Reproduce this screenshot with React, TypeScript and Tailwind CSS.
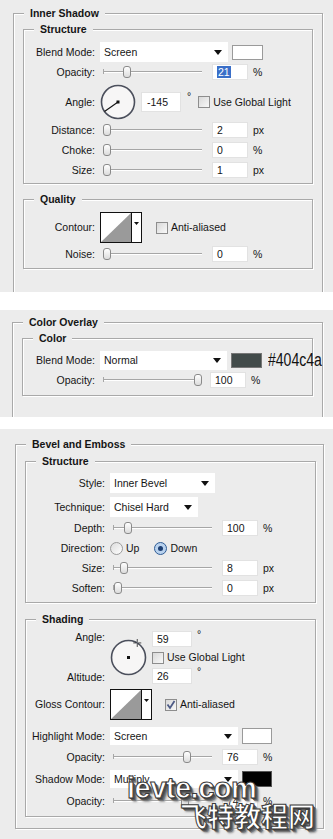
import type { ReactNode } from "react"

// Photoshop layer style dialog fragments, stacked on white

function Slider({ pct, w = "w-[99px]" }: { pct: number; w?: string }) {
  return (
    <div className={`relative h-[14px] shrink-0 ${w}`}>
      <div className="absolute left-0 right-0 top-[6px] h-px bg-[#a6a6a6]" />
      <div className="absolute left-0 right-0 top-[7px] h-px bg-white" />
      <div className="absolute left-0 top-[4px] h-[5px] w-px bg-[#a6a6a6]" />
      <div
        className="absolute top-px h-[12px] w-[8px] rounded-[3px] border border-[#8a8a8a] bg-gradient-to-b from-white to-[#dcdcdc]"
        style={{ left: `calc(${pct}% - ${(pct / 100) * 8}px)` }}
      />
    </div>
  )
}

function Field({ value, w = "w-[36px]", selected = false }: { value: string; w?: string; selected?: boolean }) {
  return (
    <div className={`flex h-[16px] shrink-0 items-center border border-[#e2e2e2] bg-white pl-[4px] ${w}`}>
      {selected ? <span className="bg-[#3a6fc8] px-px leading-[12px] text-white">{value}</span> : value}
    </div>
  )
}

function Arrow() {
  return (
    <svg width="8" height="5" viewBox="0 0 8 5" className="shrink-0">
      <path d="M0 0 H8 L4 5 Z" fill="#111" />
    </svg>
  )
}

function Dropdown({ value, w, h = "h-[20px]" }: { value: string; w: string; h?: string }) {
  return (
    <div className={`flex shrink-0 items-center justify-between bg-white pl-[4px] pr-[6px] ${w} ${h}`}>
      <span className="pt-px">{value}</span>
      <Arrow />
    </div>
  )
}

function Checkbox({ checked = false }: { checked?: boolean }) {
  return (
    <div className="flex h-[12px] w-[12px] shrink-0 items-center justify-center border border-[#8d8d8d] bg-gradient-to-br from-[#d9d9d9] to-[#f8f8f8]">
      {checked && (
        <svg width="10" height="10" viewBox="0 0 10 10">
          <path d="M1.5 4.5 L4 8 L8.5 1" fill="none" stroke="#4d5b86" strokeWidth="1.8" />
        </svg>
      )}
    </div>
  )
}

function Radio({ on = false }: { on?: boolean }) {
  return (
    <div
      className={`flex h-[13px] w-[13px] shrink-0 items-center justify-center rounded-full border ${
        on ? "border-[#2f5c95] bg-[#b9d2ee]" : "border-[#9a9a9a] bg-gradient-to-br from-[#dcdcdc] to-white"
      }`}
    >
      {on && <div className="h-[5px] w-[5px] rounded-full bg-[#1d3f73]" />}
    </div>
  )
}

function Dial({ angle, size = 36, cross = false }: { angle: number; size?: number; cross?: boolean }) {
  const c = size / 2
  const r = c - 1.5
  const a = (angle * Math.PI) / 180
  const x = c + Math.cos(a) * r
  const y = c - Math.sin(a) * r
  return (
    <svg width={size} height={size} viewBox={`0 0 ${size} ${size}`} className="shrink-0">
      <circle cx={c} cy={c} r={r} fill="#f7f6f6" stroke="#4b4f5c" strokeWidth="1.6" />
      {!cross && <line x1={c} y1={c} x2={x} y2={y} stroke="#111" strokeWidth="1.1" />}
      <rect x={c - 1.5} y={c - 1.5} width="3" height="3" fill="#111" />
      {cross && (
        <g stroke="#222" strokeWidth="0.8">
          <line x1={x - 4} y1={y} x2={x - 1} y2={y} />
          <line x1={x + 1} y1={y} x2={x + 4} y2={y} />
          <line x1={x} y1={y - 4} x2={x} y2={y - 1} />
          <line x1={x} y1={y + 1} x2={x} y2={y + 4} />
        </g>
      )}
    </svg>
  )
}

function Contour() {
  return (
    <div className="flex h-[31px] w-[42px] shrink-0 border border-[#111] bg-white">
      <svg width="30" height="29" viewBox="0 0 30 29">
        <path d="M0 29 L30 0 L30 29 Z" fill="#9a9a9a" />
      </svg>
      <div className="flex flex-1 items-start justify-center border-l border-[#111] pt-[9px]">
        <svg width="5" height="3" viewBox="0 0 5 3">
          <path d="M0 0 H5 L2.5 3 Z" fill="#111" />
        </svg>
      </div>
    </div>
  )
}

function Row({ label, lw, h = "h-[20px]", children }: { label: string; lw: string; h?: string; children: ReactNode }) {
  return (
    <div className={`flex items-center ${h}`}>
      <div className={`shrink-0 pr-[5px] text-right ${lw}`}>{label}</div>
      {children}
    </div>
  )
}

// etched group box; the title is pulled up over the top border line
function Group({ title, className, body, children }: { title: string; className: string; body: string; children: ReactNode }) {
  return (
    <div className={`border border-[#a9a9a9] shadow-[inset_1px_1px_0_#fff,1px_1px_0_#fff] ${className}`}>
      <div className="-mt-[8px] ml-[10px] w-fit bg-[#ececec] px-[6px] text-[10.5px] font-bold leading-[14px]">{title}</div>
      <div className={body}>{children}</div>
    </div>
  )
}

function SliderField({
  pct,
  value,
  unit,
  gap = "gap-[10px]",
  selected = false,
}: {
  pct: number
  value: string
  unit: string
  gap?: string
  selected?: boolean
}) {
  return (
    <div className={`ml-[3px] flex items-center ${gap}`}>
      <Slider pct={pct} />
      <div className="flex items-center gap-[5px]">
        <Field value={value} selected={selected} />
        <span>{unit}</span>
      </div>
    </div>
  )
}

const mark =
  "pointer-events-none absolute font-bold leading-[30px] text-white [-webkit-text-stroke:1px_#3a3a3a] [text-shadow:1px_1px_0_#444,2px_2px_0_#555,3px_3px_0_#777,4px_4px_2px_#999]"

export default function App() {
  return (
    <div className="h-[839px] w-[333px] overflow-hidden bg-white font-['Liberation_Sans',Arial,sans-serif] text-[10.5px] leading-[13px] text-[#151515]">
      {/* Inner Shadow */}
      <section className="flex h-[292px] flex-col bg-[#ececec] pl-[13px] pr-[10px] pt-[13px]">
        <Group title="Inner Shadow" className="flex-1 border-b-0" body="px-[9px]">
          <Group title="Structure" className="mt-[9px]" body="pb-[3px] pt-[6px]">
            <Row label="Blend Mode:" lw="w-[76px]">
              <div className="flex items-center gap-[4px]">
                <Dropdown value="Screen" w="w-[128px]" />
                <div className="h-[15px] w-[31px] border border-[#9a9a9a] bg-white" />
              </div>
            </Row>
            <Row label="Opacity:" lw="w-[76px]">
              <SliderField pct={22} value="21" unit="%" selected />
            </Row>
            <Row label="Angle:" lw="w-[76px]" h="mt-[2px] h-[36px]">
              <div className="flex items-center">
                <Dial angle={-145} size={36} />
                <div className="ml-[5px] flex h-[20px] w-[40px] items-center border border-[#e2e2e2] bg-white pl-[5px]">-145</div>
                <span className="ml-[6px] self-start pt-[6px]">°</span>
                <div className="ml-[7px] flex items-center gap-[3px]">
                  <Checkbox />
                  <span>Use Global Light</span>
                </div>
              </div>
            </Row>
            <Row label="Distance:" lw="w-[76px]">
              <SliderField pct={0} value="2" unit="px" />
            </Row>
            <Row label="Choke:" lw="w-[76px]">
              <SliderField pct={0} value="0" unit="%" />
            </Row>
            <Row label="Size:" lw="w-[76px]">
              <SliderField pct={0} value="1" unit="px" />
            </Row>
          </Group>
          <Group title="Quality" className="mt-[15px]" body="pb-[4px] pt-[6px]">
            <Row label="Contour:" lw="w-[76px]" h="h-[31px]">
              <Contour />
              <div className="ml-[14px] flex items-center gap-[3px]">
                <Checkbox />
                <span>Anti-aliased</span>
              </div>
            </Row>
            <Row label="Noise:" lw="w-[76px]" h="mt-[1px] h-[20px]">
              <SliderField pct={0} value="0" unit="%" />
            </Row>
          </Group>
        </Group>
      </section>

      {/* Color Overlay */}
      <section className="mt-[18px] flex h-[107px] flex-col bg-[#ececec] pl-[12px] pr-[10px] pt-[12px]">
        <Group title="Color Overlay" className="flex-1 border-b-0" body="px-[9px]">
          <Group title="Color" className="mt-[9px]" body="pb-[5px] pt-[5px]">
            <Row label="Blend Mode:" lw="w-[77px]">
              <div className="flex items-center">
                <Dropdown value="Normal" w="w-[127px]" h="h-[19px]" />
                <div className="ml-[4px] h-[15px] w-[31px] border border-[#777] bg-[#424b4a]" />
                <span className="ml-[6px] inline-block origin-left scale-x-[0.78] text-[18px] leading-[18px] text-[#111]">#404c4a</span>
              </div>
            </Row>
            <Row label="Opacity:" lw="w-[77px]">
              <SliderField pct={100} value="100" unit="%" gap="gap-[8px]" />
            </Row>
          </Group>
        </Group>
      </section>

      {/* Bevel and Emboss */}
      <section className="relative mt-[12px] h-[410px] bg-[#ececec] pl-[15px] pr-[9px] pt-[15px]">
        <Group title="Bevel and Emboss" className="" body="pb-[11px] pl-[9px] pr-[7px]">
          <Group title="Structure" className="mt-[10px]" body="pb-[4px] pt-[5px]">
            <Row label="Style:" lw="w-[84px]">
              <Dropdown value="Inner Bevel" w="w-[105px]" />
            </Row>
            <Row label="Technique:" lw="w-[84px]" h="mt-[4px] h-[20px]">
              <Dropdown value="Chisel Hard" w="w-[88px]" />
            </Row>
            <Row label="Depth:" lw="w-[84px]" h="mt-px h-[20px]">
              <SliderField pct={12} value="100" unit="%" />
            </Row>
            <Row label="Direction:" lw="w-[84px]">
              <div className="flex items-center">
                <Radio />
                <span className="ml-[3px]">Up</span>
                <div className="ml-[15px]">
                  <Radio on />
                </div>
                <span className="ml-[3px]">Down</span>
              </div>
            </Row>
            <Row label="Size:" lw="w-[84px]">
              <SliderField pct={8} value="8" unit="px" />
            </Row>
            <Row label="Soften:" lw="w-[84px]">
              <SliderField pct={1} value="0" unit="px" />
            </Row>
          </Group>

          <Group title="Shading" className="mt-[16px]" body="pb-[6px] pt-[4px]">
            <div className="flex h-[54px]">
              <div className="flex w-[84px] shrink-0 flex-col justify-between pr-[5px] text-right">
                <span className="leading-[14px]">Angle:</span>
                <span className="leading-[14px]">Altitude:</span>
              </div>
              <div className="flex items-center">
                <Dial angle={59} size={37} cross />
              </div>
              <div className="ml-[5px] flex flex-col gap-[4px] pt-[1px]">
                <div className="flex">
                  <Field value="59" w="w-[40px]" />
                  <span className="-mt-[3px] ml-[5px]">°</span>
                </div>
                <div className="flex items-center gap-[3px]">
                  <Checkbox />
                  <span>Use Global Light</span>
                </div>
                <div className="flex">
                  <Field value="26" w="w-[40px]" />
                  <span className="-mt-[3px] ml-[5px]">°</span>
                </div>
              </div>
            </div>
            <Row label="Gloss Contour:" lw="w-[84px]" h="mt-[5px] h-[31px]">
              <Contour />
              <div className="ml-[13px] flex items-center gap-[3px]">
                <Checkbox checked />
                <span>Anti-aliased</span>
              </div>
            </Row>
            <Row label="Highlight Mode:" lw="w-[84px]" h="mt-[7px] h-[18px]">
              <div className="flex items-center gap-[4px]">
                <Dropdown value="Screen" w="w-[128px]" h="h-[18px]" />
                <div className="h-[16px] w-[30px] border border-[#9a9a9a] bg-white" />
              </div>
            </Row>
            <Row label="Opacity:" lw="w-[84px]" h="mt-[3px] h-[18px]">
              <SliderField pct={77} value="76" unit="%" />
            </Row>
            <Row label="Shadow Mode:" lw="w-[84px]" h="mt-[4px] h-[18px]">
              <div className="flex items-center gap-[4px]">
                <Dropdown value="Multiply" w="w-[128px]" h="h-[18px]" />
                <div className="h-[16px] w-[30px] border border-[#555] bg-black" />
              </div>
            </Row>
            <Row label="Opacity:" lw="w-[84px]" h="mt-[4px] h-[18px]">
              <SliderField pct={75} value="74" unit="%" />
            </Row>
          </Group>
        </Group>

        {/* watermark over the dialog */}
        <div className={`${mark} left-[127px] top-[344px] font-['Liberation_Sans',Arial,sans-serif] text-[29px] tracking-[-0.5px]`}>
          ievte.com
        </div>
        <div className={`${mark} left-[180px] top-[372px] font-['Noto_Sans_CJK_SC',sans-serif] text-[27px]`}>飞特教程网</div>
      </section>
    </div>
  )
}
